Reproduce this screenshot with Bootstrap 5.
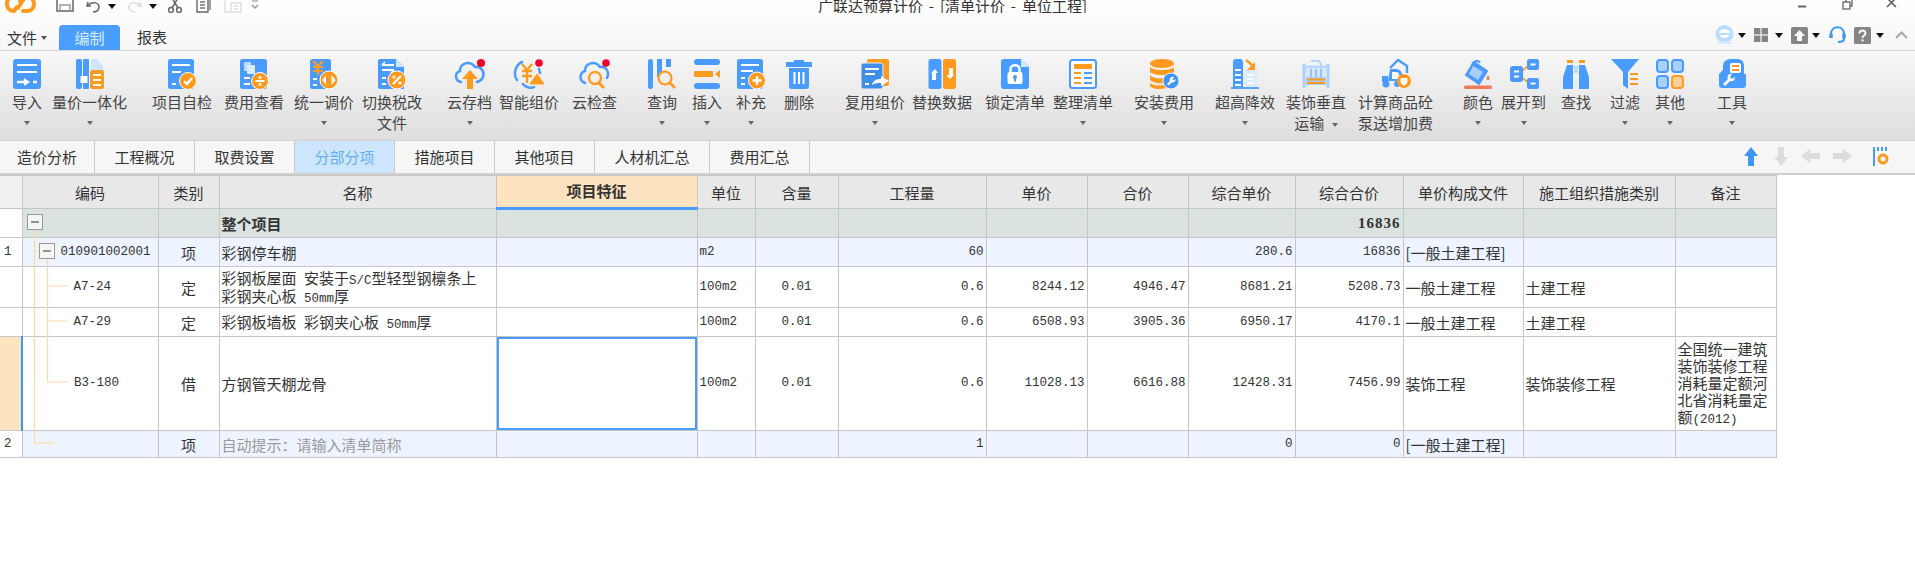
<!DOCTYPE html>
<html lang="zh">
<head>
  <meta charset="utf-8">
  <title>广联达预算计价 - [清单计价 - 单位工程]</title>
  <link rel="stylesheet" href="https://cdn.jsdelivr.net/npm/bootstrap@5.3.0/dist/css/bootstrap.min.css">
  <style>
    body {
      background: #fff;
      color: #333;
      font-family: "Noto Sans CJK SC", sans-serif;
      font-size: 15px;
      overflow: hidden;
    }
    svg { display: block; flex: none; }

    /* 顶部标题 + 菜单 */
    .app-head { height: 50px; background: linear-gradient(#fff, #f6f6f6); }
    .title-row { height: 13px; overflow: hidden; position: relative; }
    .app-title { width: 267px; line-height: 12px; margin-left: 558px; white-space: nowrap; font-size: 15px; word-spacing: 2.500px; }
    .menu-row { height: 37px; }
    .menu-txt { line-height: 24px; }
    .menu-on { width: 61px; height: 25px; line-height: 26px; background: #4a9eff; color: #d9ecff; border-radius: 4px 4px 0 0; text-align: center; }
    .mini-caret { width: 0; height: 0; border: 3px solid transparent; border-top: 4px solid #111; border-bottom: 0; }
    .mini-caret.wide { border-width: 4px; border-top-width: 5px; border-bottom-width: 0; }

    /* 工具栏 */
    .rib { height: 90px; padding-top: 8px; border-top: 1px solid #d6d6d6; background: linear-gradient(#f7f7f7, #dedede); overflow: hidden; }
    .tl { flex: none; }
    .tl-lbl { line-height: 21px; margin-top: 2px; white-space: nowrap; color: #444; }
    .tl-car { width: 0; height: 0; margin: 9px auto 0; border: 3.5px solid transparent; border-top: 4px solid #666; border-bottom: 0; }
    .tw30 { width: 30px; } .tw45 { width: 45px; } .tw60 { width: 60px; } .tw75 { width: 75px; }
    .s3 { margin-left: 3px; } .s4 { margin-left: 4px; } .s5 { margin-left: 5px; } .s9 { margin-left: 9px; }
    .s7 { margin-left: 7px; } .s8 { margin-left: 8px; } .s10 { margin-left: 10px; } .s11 { margin-left: 11px; }
    .s12 { margin-left: 12px; } .s13 { margin-left: 13px; } .s14 { margin-left: 14px; } .s15 { margin-left: 15px; }
    .s18 { margin-left: 18px; } .s19 { margin-left: 19px; } .s21 { margin-left: 21px; } .s25 { margin-left: 25px; }
    .s30 { margin-left: 30px; } .s31 { margin-left: 31px; } .s32 { margin-left: 32px; }

    /* 页签 */
    .pg-bar { height: 35px; background: #f6f6f6; border-top: 1px solid #d2d2d2; border-bottom: 2px solid #cfcfcf; }
    .pg-bar .nav-link { height: 32px; line-height: 32px; padding: 0; text-align: center; color: #333; border-right: 1px solid #cacaca; }
    .pg-bar .nav-link.active { background: #cde6fd; color: #63adf5; }
    .pg-w100 { width: 100px; } .pg-w115 { width: 115px; } .pg-w95 { width: 95px; }

    /* 表格 */
    .grid-wrap { position: relative; width: 1777px; }
    .grid-t { table-layout: fixed; width: 1776px; margin: 0; border-color: #c6c6c6; color: #333; font-size: 15px; line-height: 17px; }
    .grid-t > :not(caption) > * > * { padding: 0 2px; vertical-align: middle; border-color: #c6c6c6; color: #333; word-break: break-all; }
    .grid-t > :not(caption) > * > *:first-child { border-left: 0; }
    .grid-t .c0 { width: 22px; } .grid-t .c1 { width: 136px; } .grid-t .c2 { width: 61px; } .grid-t .c3 { width: 277px; }
    .grid-t .c4 { width: 201px; } .grid-t .c5 { width: 58px; } .grid-t .c6 { width: 83px; } .grid-t .c7 { width: 148px; }
    .grid-t .c8 { width: 101px; } .grid-t .c9 { width: 101px; } .grid-t .c10 { width: 107px; } .grid-t .c11 { width: 108px; }
    .grid-t .c12 { width: 120px; } .grid-t .c13 { width: 152px; } .grid-t .c14 { width: 101px; }
    .grid-t thead th { height: 33px; background: #e8e8e8; font-weight: 400; text-align: center; }
    .grid-t thead th.first { background: #f0f0f0; }
    .grid-t thead th.sel { background: #fde3c0; font-weight: 700; border-bottom: 3px solid #4a9bff; padding-bottom: 3px; }
    .r-sum { height: 29px; } .r-sum > td { background: #dae3df; font-weight: 700; }
    .r-b { height: 29px; } .r-b > td { background: #edf4ff; }
    .grid-t tr > td.no { background: #fff; padding: 0 0 0 4px; }
    .h41 { height: 41px; } .h29 { height: 29px; } .h27 { height: 27px; } .h94 { height: 94px; }
    .grid-t tr > td.no.mark { background: #fde3c0; border-right: 2px solid #3f97f5; }
    .grid-t tr > td.cursor { box-shadow: inset 0 0 0 2px #4a9bff; }
    .num { font-family: "Liberation Mono", monospace; font-size: 12.5px; line-height: 1; }
    .sum-num { font-family: "Liberation Serif", serif; font-size: 15px; letter-spacing: 1px; }
    .grid-t tr > td.tip { color: #9a9a9a; }
    .grid-t tr > td.code1 { padding-left: 38px; }
    .grid-t tr > td.code2 { padding-left: 51px; }
    .tree-over { position: absolute; left: 0; top: 0; pointer-events: none; }
  </style>
</head>
<body>

<div class="app-head">
  <div class="title-row d-flex">
    <svg class="ms-1" width="32" height="13" viewBox="0 0 32 13" fill="none" stroke="#ff9a1f" stroke-width="4" stroke-linecap="round"><path d="M13 -3H9C4 -3 3 1 3 4C3 8 6 11 10 11L13 7"/><path d="M19 -3L16 1M19 11H23C27 11 30 8 30 4C30 0 27 -3 23 -3H21L14 8"/></svg>
    <svg style="margin-left:20px" width="18" height="13" viewBox="0 0 18 13" fill="none" stroke="#666" stroke-width="1.5"><path d="M1 -2V11H17V-2"/><path d="M4 11V5H14V11" stroke="#999"/></svg>
    <svg class="s12" width="14" height="13" viewBox="0 0 14 13" fill="none" stroke="#666" stroke-width="1.5"><path d="M2 2L1 6L5 6"/><path d="M1 6C6 1 14 2 13 8C12 11 9 12 7 12"/></svg>
    <div class="mini-caret wide s8 mt-1"></div>
    <svg class="s12" width="14" height="13" viewBox="0 0 14 13" fill="none" stroke="#ddd" stroke-width="1.5"><path d="M12 2L13 6L9 6"/><path d="M13 6C8 1 0 2 1 8C2 11 5 12 7 12"/></svg>
    <div class="mini-caret wide s7 mt-1"></div>
    <svg class="s10" width="16" height="13" viewBox="0 0 16 13" fill="none" stroke="#666" stroke-width="1.5"><path d="M5 -2L11 8M11 -2L5 8"/><circle cx="4" cy="10" r="2.4"/><circle cx="12" cy="10" r="2.4"/></svg>
    <svg class="s13" width="15" height="13" viewBox="0 0 15 13" fill="none" stroke="#666" stroke-width="1.4"><path d="M1 -1V12H12V-1"/><path d="M4 2H9M4 5H9M4 8H9M14 0V10" stroke="#777"/></svg>
    <svg class="s13" width="18" height="13" viewBox="0 0 18 13" fill="none" stroke="#ddd" stroke-width="1.4"><path d="M1 -1V12H7"/><rect x="7" y="3" width="10" height="9"/><path d="M10 6H14M10 9H14"/></svg>
    <svg class="s8" width="10" height="13" viewBox="0 0 10 13" fill="none" stroke="#999" stroke-width="1.2"><path d="M2 1H8"/><path d="M2 5L5 8L8 5" stroke-width="1.5"/></svg>
    <div class="app-title text-center">广联达预算计价 - [清单计价 - 单位工程]</div>
    <svg class="ms-auto" width="8" height="13" viewBox="0 0 8 13"><path d="M0 6.5H8" stroke="#666" stroke-width="2"/></svg>
    <svg style="margin-left:36px" width="11" height="13" viewBox="0 0 11 13" fill="none" stroke="#666" stroke-width="1.3"><rect x="1" y="2" width="7" height="7"/><path d="M4 2V-1H10V6H8"/></svg>
    <svg style="margin-left:33px;margin-right:18px" width="11" height="13" viewBox="0 0 11 13" fill="none" stroke="#555" stroke-width="1.4"><path d="M1 -2L10 7M10 -2L1 7"/></svg>
  </div>
  <div class="menu-row d-flex align-items-end">
    <div class="d-flex align-items-center" style="margin-left:7px;height:25px;width:52px">
      <span class="menu-txt">文件</span><div class="mini-caret ms-1" style="border-top-color:#555"></div>
    </div>
    <div class="menu-on">编制</div>
    <div class="menu-txt" style="margin:0 0 1px 17px">报表</div>
    <div class="ms-auto d-flex align-items-center" style="height:37px;padding:7px 7px 0 0">
      <svg width="21" height="20" viewBox="0 0 21 20"><circle cx="10.5" cy="9" r="9" fill="#b9dcff"/><path d="M5 8C5 3 16 3 16 8Z" fill="#fff"/><path d="M6 10C6 14 15 14 15 10Z" fill="#fff"/><path d="M2 19C6 15 15 15 19 19Z" fill="#d4e9ff"/></svg>
      <div class="mini-caret wide s3"></div>
      <svg class="s8" width="14" height="14" viewBox="0 0 14 14" fill="#858585"><rect width="6.4" height="6.4"/><rect x="7.6" width="6.4" height="6.4"/><rect y="7.6" width="6.4" height="6.4"/><rect x="7.6" y="7.6" width="6.4" height="6.4"/></svg>
      <div class="mini-caret wide s7"></div>
      <svg class="s8" width="17" height="17" viewBox="0 0 17 17"><rect width="17" height="17" rx="1.5" fill="#858585"/><path d="M8.5 3L14 9H11V14H6V9H3Z" fill="#fff"/></svg>
      <div class="mini-caret wide s4"></div>
      <svg class="s9" width="17" height="18" viewBox="0 0 17 18" fill="none" stroke="#3f97f5" stroke-width="2.2"><path d="M2 10V8C2 -1 15 -1 15 8V10"/><path d="M15 9V13C15 15 13 16 9 16"/><path d="M2 8V12M15 8V12" stroke-width="3.4"/></svg>
      <svg class="s8" width="17" height="17" viewBox="0 0 17 17"><rect width="17" height="17" rx="1.5" fill="#858585"/><path d="M5.5 6.5C5.5 2.5 11.5 2.5 11.5 6.5C11.5 8.5 8.5 8.5 8.5 11" fill="none" stroke="#fff" stroke-width="1.8"/><rect x="7.5" y="12.4" width="2" height="2" fill="#fff"/></svg>
      <div class="mini-caret wide s5"></div>
      <svg class="s11" width="13" height="8" viewBox="0 0 13 8" fill="none" stroke="#a8a8a8" stroke-width="2"><path d="M1 7L6.5 1.5L12 7"/></svg>
    </div>
  </div>
</div>

<div class="rib d-flex">
  <!-- 导入 -->
  <div class="tl tw30 s12 text-center">
    <svg width="30" height="30" viewBox="0 0 30 30"><rect x="1" width="28" height="30" rx="3" fill="#4a9bff"/><path d="M5 6H25M5 13H25" stroke="#fff" stroke-width="2"/><path d="M5 23H13M21 23H25" stroke="#fff" stroke-width="2.6"/><path d="M12 19L18 23L12 27Z" fill="#fff"/></svg>
    <div class="tl-lbl">导入</div><div class="tl-car"></div>
  </div>
  <!-- 量价一体化 -->
  <div class="tl tw75 s10 text-center d-flex flex-column align-items-center">
    <svg width="30" height="30" viewBox="0 0 30 30"><rect x="1" width="6" height="30" rx="2" fill="#4a9bff"/><rect x="8" width="6" height="30" rx="1" fill="#4a9bff"/><rect x="5.5" y="17" width="7" height="7" fill="#fff"/><path d="M16 0H22L28 7V13H16Z" fill="#cfe4ff"/><rect x="15" y="11" width="14" height="19" rx="2.5" fill="#ff9a1f"/><path d="M18 16H26M18 21H26M18 26H26" stroke="#fff" stroke-width="2"/></svg>
    <div class="tl-lbl">量价一体化</div><div class="tl-car"></div>
  </div>
  <!-- 项目自检 -->
  <div class="tl tw60 s25 d-flex flex-column align-items-center">
    <svg width="30" height="30" viewBox="0 0 30 30"><rect x="1" width="26" height="30" rx="2.5" fill="#4a9bff"/><path d="M5 6H23M5 13H14M5 25H9" stroke="#fff" stroke-width="2"/><circle cx="21" cy="22" r="8.5" fill="#ff9a1f" stroke="#fff"/><path d="M17 22L20 25L25 19" fill="none" stroke="#fff" stroke-width="2.4"/></svg>
    <div class="tl-lbl">项目自检</div>
  </div>
  <!-- 费用查看 -->
  <div class="tl tw60 s12 d-flex flex-column align-items-center">
    <svg width="30" height="30" viewBox="0 0 30 30"><rect x="1" width="27" height="30" rx="2.5" fill="#4a9bff"/><rect x="5" y="3" width="7" height="9" fill="#bcd9ff"/><rect x="8" y="6" width="8" height="9" rx="1" fill="#dcebff"/><path d="M5 19H11M5 25H11" stroke="#fff" stroke-width="2"/><circle cx="21" cy="22" r="8.5" fill="#ff9a1f" stroke="#fff"/><path d="M16.5 22H25.5" stroke="#fff" stroke-width="2"/><circle cx="21" cy="18.5" r="1.4" fill="#fff"/><circle cx="21" cy="25.5" r="1.4" fill="#fff"/></svg>
    <div class="tl-lbl">费用查看</div>
  </div>
  <!-- 统一调价 -->
  <div class="tl tw60 s10 d-flex flex-column align-items-center">
    <svg width="30" height="30" viewBox="0 0 30 30"><rect x="1" width="21" height="30" rx="2.5" fill="#4a9bff"/><path d="M4 2L9 7L14 2M4 8H14M4 12H14M9 7V16" fill="none" stroke="#ff9a1f" stroke-width="2.2"/><path d="M4 20H8M4 26H8" stroke="#fff" stroke-width="2"/><circle cx="20" cy="21" r="9" fill="#ff9a1f" stroke="#fff"/><path d="M17 16V26L13.5 21ZM22.500 26V16L26.500 21Z" fill="#fff"/></svg>
    <div class="tl-lbl">统一调价</div><div class="tl-car"></div>
  </div>
  <!-- 切换税改 -->
  <div class="tl tw60 s8 d-flex flex-column align-items-center">
    <svg width="30" height="30" viewBox="0 0 30 30"><path d="M1 2.500A2.500 2.500 0 0 1 3.500 0H19L27 8V30H3.500A2.500 2.500 0 0 1 1 27.500Z" fill="#4a9bff"/><path d="M19 0L27 8H19Z" fill="#cfe4ff"/><path d="M5 6H17M5 11H17" stroke="#fff" stroke-width="2"/><path d="M8 3L5 6M14 14L17 11" stroke="#fff" stroke-width="1.600"/><path d="M5 19H9M5 25H9" stroke="#fff" stroke-width="2"/><circle cx="20" cy="21" r="9" fill="#ff9a1f" stroke="#fff"/><path d="M16 25L24 17" stroke="#fff" stroke-width="2"/><circle cx="17" cy="18" r="1.600" fill="#fff"/><circle cx="23" cy="24" r="1.600" fill="#fff"/></svg>
    <div class="tl-lbl">切换税改<br><span class="d-block text-center">文件</span></div>
  </div>
  <!-- 云存档 -->
  <div class="tl tw45 s25 d-flex flex-column align-items-center">
    <svg width="32" height="30" viewBox="0 0 32 30"><path d="M7 23C1 22 0 14 6 12C6 4 16 1 21 8C27 7 31 13 29 18C28 21 26 22 23 23" fill="none" stroke="#4a9bff" stroke-width="2.500" stroke-linecap="round"/><path d="M16 11L24 20H19V30H13V20H8Z" fill="#ff9a1f"/><circle cx="27" cy="4" r="4" fill="#f0002a"/></svg>
    <div class="tl-lbl">云存档</div><div class="tl-car"></div>
  </div>
  <!-- 智能组价 -->
  <div class="tl tw60 s7 d-flex flex-column align-items-center">
    <svg width="32" height="30" viewBox="0 0 32 30"><path d="M9 3C2 6 0 16 4 21M10 25C12 28 18 30 21 28M26 10L27 14" fill="none" stroke="#4a9bff" stroke-width="2.500" stroke-linecap="round"/><path d="M9 5L14 11L19 5M9 12H19M9 17H19M14 11V24" fill="none" stroke="#ff9a1f" stroke-width="2.400"/><path d="M24 15L31 25H17Z" fill="#ff9a1f" stroke="#ff9a1f" stroke-linejoin="round"/><circle cx="26" cy="4" r="3.800" fill="#f0002a"/></svg>
    <div class="tl-lbl">智能组价</div>
  </div>
  <!-- 云检查 -->
  <div class="tl tw45 s13 d-flex flex-column align-items-center">
    <svg width="32" height="30" viewBox="0 0 32 30"><path d="M6 24C0 22 0 14 6 12C6 4 16 1 21 8C27 7 31 13 28 19" fill="none" stroke="#4a9bff" stroke-width="2.500" stroke-linecap="round"/><circle cx="16" cy="19" r="6" fill="none" stroke="#ff9a1f" stroke-width="2.400"/><path d="M20 24L25 29" stroke="#ff9a1f" stroke-width="2.800"/><circle cx="27" cy="4" r="3.800" fill="#f0002a"/></svg>
    <div class="tl-lbl">云检查</div>
  </div>
  <!-- 查询 -->
  <div class="tl tw30 s30 d-flex flex-column align-items-center">
    <svg width="30" height="30" viewBox="0 0 30 30"><rect x="1" width="5" height="30" rx="2.500" fill="#4a9bff"/><path d="M10 0H15V13L12.500 14L10 19Z" fill="#4a9bff"/><path d="M19 0H24V8H19Z" fill="#4a9bff"/><circle cx="18" cy="19" r="6.500" fill="none" stroke="#ff9a1f" stroke-width="2.200"/><path d="M23 24L28 29" stroke="#ff9a1f" stroke-width="2.600"/></svg>
    <div class="tl-lbl">查询</div><div class="tl-car"></div>
  </div>
  <!-- 插入 -->
  <div class="tl tw30 s15 d-flex flex-column align-items-center">
    <svg width="30" height="30" viewBox="0 0 30 30"><rect x="2" width="26" height="6" rx="3" fill="#4a9bff"/><rect x="2" y="12" width="19" height="6" rx="1" fill="#ff9a1f"/><path d="M28 11V19L23 15Z" fill="#ff9a1f"/><rect x="2" y="24" width="26" height="6" rx="3" fill="#4a9bff"/></svg>
    <div class="tl-lbl">插入</div><div class="tl-car"></div>
  </div>
  <!-- 补充 -->
  <div class="tl tw30 s14 d-flex flex-column align-items-center">
    <svg width="30" height="30" viewBox="0 0 30 30"><rect x="1" width="26" height="30" rx="2.500" fill="#4a9bff"/><path d="M5 6H23M5 12H17M5 19H9M5 25H9" stroke="#fff" stroke-width="2"/><circle cx="21" cy="21.500" r="8.500" fill="#ff9a1f" stroke="#fff"/><path d="M16.500 21.500H25.500M21 17V26" stroke="#fff" stroke-width="2.400"/></svg>
    <div class="tl-lbl">补充</div><div class="tl-car"></div>
  </div>
  <!-- 删除 -->
  <div class="tl tw30 s18 d-flex flex-column align-items-center">
    <svg width="30" height="30" viewBox="0 0 30 30"><path d="M10 3V1H20V3H28V8H2V3Z" fill="#4a9bff"/><path d="M5 9H25V27A3 3 0 0 1 22 30H8A3 3 0 0 1 5 27Z" fill="#4a9bff"/><path d="M10.500 13V25M15 13V25M19.500 13V25" stroke="#fff" stroke-width="2"/></svg>
    <div class="tl-lbl">删除</div>
  </div>
  <!-- 复用组价 -->
  <div class="tl tw60 s31 d-flex flex-column align-items-center">
    <svg width="30" height="30" viewBox="0 0 30 30"><rect x="7" width="22" height="27" rx="2" fill="#ff9a1f"/><rect x="1" y="4" width="22" height="26" rx="2.500" fill="#3f8fe8" stroke="#f0f0f0"/><path d="M5 10H19M5 15H15M5 25H9" stroke="#fff" stroke-width="2"/><path d="M12 26C13 21 17 20 21 20V17L29 22L21 27V24C18 24 15 24 12 26Z" fill="#fff"/></svg>
    <div class="tl-lbl">复用组价</div><div class="tl-car"></div>
  </div>
  <!-- 替换数据 -->
  <div class="tl tw60 s7 d-flex flex-column align-items-center">
    <svg width="30" height="30" viewBox="0 0 30 30"><rect x="1.500" width="13" height="30" rx="2.500" fill="#4a9bff"/><rect x="16" width="13" height="30" rx="2.500" fill="#ff9a1f"/><path d="M5 21V14H4L8 10L11 14H9V21ZM26 9V16H27L23 20L19 16H22V9Z" fill="#fff"/></svg>
    <div class="tl-lbl">替换数据</div>
  </div>
  <!-- 锁定清单 -->
  <div class="tl tw60 s13 d-flex flex-column align-items-center">
    <svg width="30" height="30" viewBox="0 0 30 30"><path d="M1 3A3 3 0 0 1 4 0H21L29 8V27A3 3 0 0 1 26 30H4A3 3 0 0 1 1 27Z" fill="#4a9bff"/><path d="M21 0L29 8H21Z" fill="#d8e9ff"/><path d="M10.500 14V10C10.500 5 19.500 5 19.500 10V14" fill="none" stroke="#fff" stroke-width="2.400"/><rect x="7.500" y="13" width="15" height="12" rx="2" fill="#fff"/><circle cx="15" cy="18" r="2" fill="#4a9bff"/><rect x="14" y="18" width="2" height="4.500" fill="#4a9bff"/></svg>
    <div class="tl-lbl">锁定清单</div>
  </div>
  <!-- 整理清单 -->
  <div class="tl tw60 s8 d-flex flex-column align-items-center">
    <svg width="30" height="30" viewBox="0 0 30 30"><rect x="2" y="1" width="26" height="28" rx="2.500" fill="#fff" stroke="#4a9bff" stroke-width="2"/><rect x="6" y="5" width="18" height="5" rx="1" fill="#ff9a1f"/><path d="M6 14H13M6 19H13M6 24H13" stroke="#ff9a1f" stroke-width="2"/><path d="M16 14H24M16 19H24M16 24H24" stroke="#4a9bff" stroke-width="2"/></svg>
    <div class="tl-lbl">整理清单</div><div class="tl-car"></div>
  </div>
  <!-- 安装费用 -->
  <div class="tl tw60 s21 d-flex flex-column align-items-center">
    <svg width="30" height="30" viewBox="0 0 30 30"><ellipse cx="13" cy="4.500" rx="12" ry="4.500" fill="#ff9a1f"/><path d="M1 8C4 12 22 12 25 8V13C22 17 4 17 1 13ZM1 16C4 20 14 20 17 19L15 24C9 25 3 23 1 21ZM1 24C3 26 9 27 15 26L17 29C10 31 3 30 1 27Z" fill="#ff9a1f"/><circle cx="22" cy="22" r="8" fill="#3f97f5" stroke="#eee"/><path d="M25 18C22 17 20 20 21 22L18 25L19.500 26.500L22.500 23.500C25 24 27 22 26.500 20L24.500 21.500L23.500 20.500Z" fill="#fff"/></svg>
    <div class="tl-lbl">安装费用</div><div class="tl-car"></div>
  </div>
  <!-- 超高降效 -->
  <div class="tl tw60 s21 d-flex flex-column align-items-center">
    <svg width="30" height="30" viewBox="0 0 30 30"><path d="M3 3A3 3 0 0 1 6 0H10A3 3 0 0 1 13 3V28H3Z" fill="#4a9bff"/><rect x="14" y="11" width="13" height="17" fill="#dcebff"/><path d="M5 11H11M5 16H11M5 21H11M5 26H11" stroke="#fff" stroke-width="2"/><path d="M17 16H24M17 20H24M17 24H24" stroke="#fff" stroke-width="1.600"/><path d="M1 29H29" stroke="#4a9bff" stroke-width="1.800"/><path d="M16 1L22 6" stroke="#ff9a1f" stroke-width="2.500"/><path d="M25 3V11H17Z" fill="#ff9a1f"/></svg>
    <div class="tl-lbl">超高降效</div><div class="tl-car"></div>
  </div>
  <!-- 装饰垂直运输 -->
  <div class="tl tw60 s11 d-flex flex-column align-items-center">
    <svg width="30" height="30" viewBox="0 0 30 30"><path d="M3 5V29M27 5V29" stroke="#a9cfff" stroke-width="3"/><path d="M3 8H27" stroke="#b6d6ff" stroke-width="3"/><path d="M10 2L18 2L21 7" fill="none" stroke="#b6d6ff" stroke-width="2"/><rect x="5" y="9" width="20" height="9" fill="#d8e9ff"/><path d="M10 10V18M15 10V18M20 10V18" stroke="#7db6ff" stroke-width="1.600"/><rect x="5" y="18" width="20" height="8" fill="#a9cfff"/><path d="M6 20.500H24M6 24H24" stroke="#ff9a1f" stroke-width="2"/></svg>
    <div class="tl-lbl text-center">装饰垂直<br>运输 <span class="tl-car d-inline-block m-0 ms-1 align-middle"></span></div>
  </div>
  <!-- 计算商品砼 -->
  <div class="tl tw75 s12 d-flex flex-column align-items-center">
    <svg width="30" height="30" viewBox="0 0 30 30"><path d="M9 9L17 1L26 7V14" fill="none" stroke="#4a9bff" stroke-width="2.400"/><path d="M9 10H15C20 10 22 14 21 22H7Z" fill="#4a9bff"/><path d="M11 13H15C18 13 19 16 18.500 20H11Z" fill="#fff"/><rect x="1" y="17" width="6" height="6" fill="#4a9bff"/><circle cx="5" cy="25" r="3.500" fill="#4a9bff"/><circle cx="16" cy="25" r="3" fill="#4a9bff"/><circle cx="23" cy="22" r="7" fill="#ff9a1f"/><path d="M19.500 19H26.500V22C26.500 24 25 25.500 23 26.500C21 25.500 19.500 24 19.500 22Z" fill="#fff"/></svg>
    <div class="tl-lbl">计算商品砼<br>泵送增加费</div>
  </div>
  <!-- 颜色 -->
  <div class="tl tw30 s30 d-flex flex-column align-items-center">
    <svg width="30" height="30" viewBox="0 0 30 30"><path d="M9 8C9 2 15 0 17 4" fill="none" stroke="#4a9bff" stroke-width="2"/><path d="M11 3L24 12L16 25L3 16Z" fill="#4a9bff" stroke="#4a9bff" stroke-width="2" stroke-linejoin="round"/><path d="M10 7L20 13L15 21L6 15Z" fill="#a9cfff"/><path d="M25 16C23 19 23 21 25 21C27 21 27 19 25 16Z" fill="#f07a5a"/><rect x="1" y="26.500" width="28" height="3.500" rx="1.500" fill="#f07a5a"/></svg>
    <div class="tl-lbl">颜色</div><div class="tl-car"></div>
  </div>
  <!-- 展开到 -->
  <div class="tl tw45 s8 d-flex flex-column align-items-center">
    <svg width="30" height="30" viewBox="0 0 30 30"><path d="M12 13L20 6M12 18L20 24" stroke="#ff9a1f" stroke-width="1.600"/><rect x="1" y="7" width="13" height="16" rx="3" fill="#4a9bff"/><path d="M5 12.500H10M5 17.500H10" stroke="#fff" stroke-width="2"/><rect x="18" width="12" height="11" rx="2.500" fill="#4a9bff"/><rect x="21.500" y="4.500" width="5" height="2" fill="#fff"/><rect x="18" y="19" width="12" height="11" rx="2.500" fill="#4a9bff"/><rect x="21.500" y="23.500" width="5" height="2" fill="#fff"/></svg>
    <div class="tl-lbl">展开到</div><div class="tl-car"></div>
  </div>
  <!-- 查找 -->
  <div class="tl tw30 s15 d-flex flex-column align-items-center">
    <svg width="30" height="30" viewBox="0 0 30 30"><path d="M6 6H12V30H2V18ZM18 6H24L28 18V30H18Z" fill="#4a9bff"/><rect x="6" y="1" width="6" height="3" fill="#ff9a1f"/><rect x="18" y="1" width="6" height="3" fill="#ff9a1f"/><path d="M14 7V14M16 7V14" stroke="#9cc8ff" stroke-width="1.200"/></svg>
    <div class="tl-lbl">查找</div>
  </div>
  <!-- 过滤 -->
  <div class="tl tw30 s19 d-flex flex-column align-items-center">
    <svg width="30" height="30" viewBox="0 0 30 30"><path d="M1 0H29L18 13V30L13 26V13Z" fill="#4a9bff"/><path d="M20 15H28M20 20H28M20 25H28" stroke="#ff9a1f" stroke-width="2"/></svg>
    <div class="tl-lbl">过滤</div><div class="tl-car"></div>
  </div>
  <!-- 其他 -->
  <div class="tl tw30 s15 d-flex flex-column align-items-center">
    <svg width="30" height="30" viewBox="0 0 30 30"><rect x="2" y="1" width="11" height="12" rx="3" fill="#a9cfff" stroke="#4a9bff" stroke-width="2"/><rect x="17" y="1" width="11" height="12" rx="3" fill="#a9cfff" stroke="#4a9bff" stroke-width="2"/><rect x="2" y="17" width="11" height="12" rx="3" fill="#a9cfff" stroke="#4a9bff" stroke-width="2"/><rect x="17" y="17" width="11" height="12" rx="3" fill="#ffd09a" stroke="#ff9a1f" stroke-width="2"/></svg>
    <div class="tl-lbl">其他</div><div class="tl-car"></div>
  </div>
  <!-- 工具 -->
  <div class="tl tw30 s32 d-flex flex-column align-items-center">
    <svg width="30" height="30" viewBox="0 0 30 30"><path d="M6 11V7C6 2 10 0 14 0H20C25 0 27 3 27 7V15H29V26A3 3 0 0 1 26 29H5A3 3 0 0 1 2 26V15Z" fill="#4a9bff"/><rect x="13" y="4" width="11" height="10" rx="2" fill="#fff"/><path d="M15 7H22M15 11H22" stroke="#ff9a1f" stroke-width="2"/><path d="M15 15C11 14 10 18 11 20L6 25L8 27L13 22C16 23 18 21 18 18L15 20L13 18Z" fill="#fff"/></svg>
    <div class="tl-lbl">工具</div><div class="tl-car"></div>
  </div>
</div>

<div class="pg-bar d-flex">
  <ul class="nav flex-nowrap">
    <li class="nav-item"><a class="nav-link pg-w95">造价分析</a></li>
    <li class="nav-item"><a class="nav-link pg-w100">工程概况</a></li>
    <li class="nav-item"><a class="nav-link pg-w100">取费设置</a></li>
    <li class="nav-item"><a class="nav-link pg-w100 active">分部分项</a></li>
    <li class="nav-item"><a class="nav-link pg-w100">措施项目</a></li>
    <li class="nav-item"><a class="nav-link pg-w100">其他项目</a></li>
    <li class="nav-item"><a class="nav-link pg-w115">人材机汇总</a></li>
    <li class="nav-item"><a class="nav-link pg-w100">费用汇总</a></li>
  </ul>
  <div class="ms-auto d-flex align-items-center" style="padding:0 25px 2px 0">
    <svg width="14" height="19" viewBox="0 0 14 19"><path d="M7 0L14 9H10V19H4V9H0Z" fill="#3f97f5"/></svg>
    <svg style="margin-left:16px" width="14" height="19" viewBox="0 0 14 19"><path d="M7 19L14 10H10V0H4V10H0Z" fill="#dcdcdc"/></svg>
    <svg style="margin-left:13px" width="19" height="14" viewBox="0 0 19 14"><path d="M0 7L9 0V4H19V10H9V14Z" fill="#dcdcdc"/></svg>
    <svg style="margin-left:13px" width="19" height="14" viewBox="0 0 19 14"><path d="M19 7L10 0V4H0V10H10V14Z" fill="#dcdcdc"/></svg>
    <svg style="margin-left:21px" width="17" height="19" viewBox="0 0 17 19"><path d="M1 0V19" stroke="#4a9bff" stroke-width="2"/><path d="M5 0V4M9 0V4M13 0V4" stroke="#4a9bff" stroke-width="2"/><circle cx="10" cy="12" r="4" fill="none" stroke="#ff9a1f" stroke-width="3"/></svg>
  </div>
</div>

<div class="grid-wrap">
  <table class="table table-bordered grid-t">
    <thead>
      <tr>
        <th class="c0 first"></th><th class="c1">编码</th><th class="c2">类别</th><th class="c3">名称</th><th class="c4 sel">项目特征</th><th class="c5">单位</th><th class="c6">含量</th><th class="c7">工程量</th><th class="c8">单价</th><th class="c9">合价</th><th class="c10">综合单价</th><th class="c11">综合合价</th><th class="c12">单价构成文件</th><th class="c13">施工组织措施类别</th><th class="c14">备注</th>
      </tr>
    </thead>
    <tbody>
      <tr class="r-sum">
        <td class="no"></td><td></td><td></td><td>整个项目</td><td></td><td></td><td></td><td></td><td></td><td></td><td></td><td class="text-end sum-num">16836</td><td></td><td></td><td></td>
      </tr>
      <tr class="r-b">
        <td class="no num">1</td><td class="num code1">010901002001</td><td class="text-center">项</td><td>彩钢停车棚</td><td></td><td class="num">m2</td><td></td><td class="text-end num">60</td><td></td><td></td><td class="text-end num">280.6</td><td class="text-end num">16836</td><td>[一般土建工程]</td><td></td><td></td>
      </tr>
      <tr class="h41">
        <td class="no"></td><td class="num code2">A7-24</td><td class="text-center">定</td><td>彩钢板屋面<span class="num">&nbsp;</span>安装于<span class="num">S/C</span>型轻型钢檩条上<br>彩钢夹心板<span class="num">&nbsp;50mm</span>厚</td><td></td><td class="num">100m2</td><td class="text-center num">0.01</td><td class="text-end num">0.6</td><td class="text-end num">8244.12</td><td class="text-end num">4946.47</td><td class="text-end num">8681.21</td><td class="text-end num">5208.73</td><td>一般土建工程</td><td>土建工程</td><td></td>
      </tr>
      <tr class="h29">
        <td class="no"></td><td class="num code2">A7-29</td><td class="text-center">定</td><td>彩钢板墙板<span class="num">&nbsp;</span>彩钢夹心板<span class="num">&nbsp;50mm</span>厚</td><td></td><td class="num">100m2</td><td class="text-center num">0.01</td><td class="text-end num">0.6</td><td class="text-end num">6508.93</td><td class="text-end num">3905.36</td><td class="text-end num">6950.17</td><td class="text-end num">4170.1</td><td>一般土建工程</td><td>土建工程</td><td></td>
      </tr>
      <tr class="h94">
        <td class="no mark"></td><td class="num code2">B3-180</td><td class="text-center">借</td><td>方钢管天棚龙骨</td><td class="cursor"></td><td class="num">100m2</td><td class="text-center num">0.01</td><td class="text-end num">0.6</td><td class="text-end num">11028.13</td><td class="text-end num">6616.88</td><td class="text-end num">12428.31</td><td class="text-end num">7456.99</td><td>装饰工程</td><td>装饰装修工程</td><td>全国统一建筑装饰装修工程消耗量定额河北省消耗量定额<span class="num">(2012)</span></td>
      </tr>
      <tr class="r-b h27">
        <td class="no num">2</td><td></td><td class="text-center">项</td><td class="tip">自动提示：请输入清单简称</td><td></td><td></td><td></td><td class="text-end num">1</td><td></td><td></td><td class="text-end num">0</td><td class="text-end num">0</td><td>[一般土建工程]</td><td></td><td></td>
      </tr>
    </tbody>
  </table>
  <!-- 树形连线 -->
  <svg class="tree-over" width="80" height="285" viewBox="0 0 80 285" fill="none">
    <path d="M34.500 55V268H55M34.500 76H39M47.500 84V207H67M47.500 111H67M47.500 146H67" stroke="#fcd9a0" stroke-width="1.200"/>
    <rect x="27.500" y="39.500" width="15" height="15" fill="#f6f6f6" stroke="#999"/>
    <path d="M31 47H39" stroke="#333"/>
    <rect x="39.500" y="68.500" width="15" height="15" fill="#f6f6f6" stroke="#999"/>
    <path d="M43 76H51" stroke="#333"/>
  </svg>
</div>

</body>
</html>
